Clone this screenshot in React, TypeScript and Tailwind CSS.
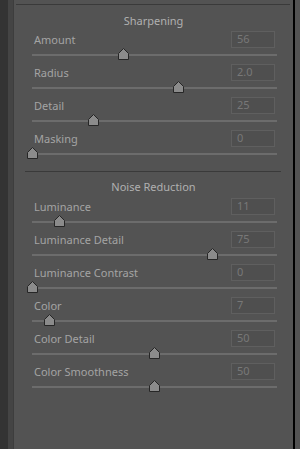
import React from "react";

interface SliderRowProps {
  label: string;
  value: string;
  percent: number;
}

function SliderRow({ label, value, percent }: SliderRowProps) {
  return (
    <div className="h-[33px] pl-[18px] pr-[16px]">
      <div className="flex items-center justify-between h-[17px]">
        <span className="pl-[2px] text-[11px] leading-none text-[#a4a4a4]">{label}</span>
        <div className="w-[44px] h-[17px] mr-[2px] border border-[#5f5f5f] bg-[#4f4f4f] flex items-center px-[5px] text-[11px] text-[#787878]">
          {value}
        </div>
      </div>
      <div className="relative mt-[6px] h-[2px] bg-[#6c6c6c]">
        {/* thumb */}
        <svg
          className="absolute top-[-6px]"
          style={{ left: `${percent * 243 - 5}px` }}
          width="11"
          height="12"
          viewBox="0 0 11 12"
        >
          <path d="M5.5 0.5 L10.5 5.5 L10.5 11.5 L0.5 11.5 L0.5 5.5 Z" fill="#8b8b8b" stroke="#262626" strokeWidth="1" />
        </svg>
      </div>
    </div>
  );
}

const sharpening = [
  { label: "Amount", value: "56", percent: 56 / 150 },
  { label: "Radius", value: "2.0", percent: 1.5 / 2.5 },
  { label: "Detail", value: "25", percent: 0.25 },
  { label: "Masking", value: "0", percent: 0 },
];

const noise = [
  { label: "Luminance", value: "11", percent: 0.11 },
  { label: "Luminance Detail", value: "75", percent: 0.74 },
  { label: "Luminance Contrast", value: "0", percent: 0 },
  { label: "Color", value: "7", percent: 0.07 },
  { label: "Color Detail", value: "50", percent: 0.5 },
  { label: "Color Smoothness", value: "50", percent: 0.5 },
];

export default function App() {
  return (
    <div className="flex w-[300px] h-[449px] bg-[#535353] font-['Noto_Sans',_sans-serif] overflow-hidden">
      <div className="w-[8px] bg-[#333333]" />
      <div className="w-[6px] bg-[#444444] border-r border-[#3d3d3d]" />
      <div className="flex-1 bg-[#535353]">
        <div className="mt-[4px] ml-[2px] mr-[3px] h-px bg-[#3a3a3a]" />
        <div className="h-[26px] flex items-center justify-center pt-[6px] text-[11px] text-[#b0b0b0]">
          Sharpening
        </div>
        {sharpening.map((r) => (
          <SliderRow key={r.label} {...r} />
        ))}
        <div className="mt-[8px] ml-[11px] mr-[12px] h-px bg-[#3a3a3a]" />
        <div className="h-[26px] flex items-center justify-center pt-[5px] text-[11px] text-[#b0b0b0]">
          Noise Reduction
        </div>
        {noise.map((r) => (
          <SliderRow key={r.label} {...r} />
        ))}
      </div>
      <div className="w-[2px] bg-black" />
      <div className="w-[5px] bg-[#535353]" />
    </div>
  );
}
